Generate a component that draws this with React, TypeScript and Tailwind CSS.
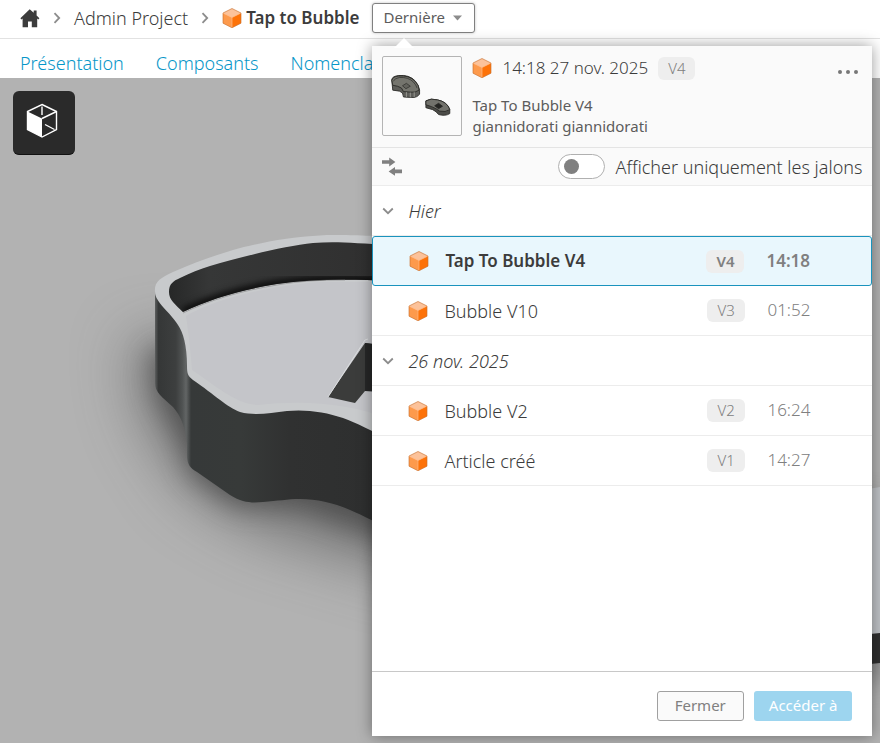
import { useState } from "react";

interface Version {
  name: string;
  tag: string;
  time: string;
  current?: boolean;
}

interface VersionGroup {
  label: string;
  versions: Version[];
}

const tabs = ["Présentation", "Composants", "Nomenclature"];

const groups: VersionGroup[] = [
  {
    label: "Hier",
    versions: [
      { name: "Tap To Bubble V4", tag: "V4", time: "14:18", current: true },
      { name: "Bubble V10", tag: "V3", time: "01:52" },
    ],
  },
  {
    label: "26 nov. 2025",
    versions: [
      { name: "Bubble V2", tag: "V2", time: "16:24" },
      { name: "Article créé", tag: "V1", time: "14:27" },
    ],
  },
];

function CubeIcon() {
  return (
    <svg width="20" height="20" viewBox="0 0 20 20" className="shrink-0" aria-hidden="true">
      <path d="M10 0.5 19 5 10 9.5 1 5Z" fill="#fcc29a" />
      <path d="M1 5 10 9.5V19.8L1 15.2Z" fill="#fd9a4c" />
      <path d="M19 5 10 9.5V19.8L19 15.2Z" fill="#fd7208" />
      <path d="M10 0.5 19 5V15.2L10 19.8 1 15.2V5Z" fill="none" stroke="#c9702f" strokeOpacity="0.7" strokeWidth="0.9" />
      <path d="M1.4 5.2 10 9.5 18.6 5.2M10 9.5V19.2" fill="none" stroke="#ffb984" strokeWidth="0.7" />
    </svg>
  );
}

function HomeIcon() {
  return (
    <svg width="20" height="19" viewBox="0 0 20 19" aria-hidden="true">
      <path
        d="M9.7 0.3 0.4 9.2 1.5 10.4 2.6 9.5V18.2H8V12.6H11.8V18.2H17.2V9.5L18.3 10.4 19.4 9.2 16.6 6.5V1.6H13.7V3.8Z"
        fill="#3c3c3c"
      />
    </svg>
  );
}

function Chevron({ className }: { className?: string }) {
  return (
    <svg width="8" height="12" viewBox="0 0 8 12" className={className} aria-hidden="true">
      <path d="M1.5 1.2 6.2 6 1.5 10.8" fill="none" stroke="#8c8c8c" strokeWidth="1.8" />
    </svg>
  );
}

function ViewCubeIcon() {
  return (
    <svg width="32" height="36" viewBox="0 0 32 36" className="mr-1 mb-1" aria-hidden="true">
      <path d="M16 1.5 30.5 8.5V26.5L16 34 1.5 26.5V8.5Z" fill="none" stroke="#fff" strokeWidth="1.4" />
      <path d="M1.5 8.5 16 15.5V34L1.5 26.5Z" fill="#fff" />
      <path d="M16 15.5 30.5 8.5M16 3.5V12M19 21.5 28.5 26.5" fill="none" stroke="#fff" strokeWidth="1.4" />
    </svg>
  );
}

function CompareIcon() {
  return (
    <svg width="20" height="19" viewBox="0 0 20 19" aria-hidden="true">
      <path d="M0 3.2H7.2V0.5L13.4 5 7.2 9.5V6.8H0Z" fill="#808080" />
      <path d="M20 12.6H13V10L6.6 14.4 13 18.8V16.2H20Z" fill="#808080" />
    </svg>
  );
}

function Thumbnail() {
  return (
    <svg
      viewBox="0 0 80 80"
      className="size-20 shrink-0 rounded-xs border border-[#b4b4b4] bg-[#fafafa]"
      role="img"
      aria-label="Tap To Bubble V4"
    >
      <g stroke="#292926" strokeWidth="0.9" strokeLinejoin="round">
        <path d="M9 23.5 Q9 20 16 19 Q27 18 33 24.5 Q37 29 37.5 34 V38 Q35 42 29 41.5 L21 41 Q21 36 17 35 L10 34 Z" fill="#5d5d59" />
        <path d="M9 24 Q10 20 16 19.5 Q27 18.5 33 25 Q37 29 37 34 Q33 37 28 36 L21 35.5 Q20 31 15 30 L10 29 Z" fill="#74746d" />
        <path d="M10.5 25 Q12 21.5 17 21 Q26 20.5 31 25.5 Q34 28.5 35 32" fill="none" strokeWidth="0.7" />
        <path d="M20 29.5 24 27 28 30 23.5 32.5Z" fill="#63635d" strokeWidth="0.7" />
        <path d="M24 36V41M28 36.5V41.5M32 36V41" fill="none" stroke="#a6a6a0" strokeWidth="0.8" />
        <path d="M44 45 Q49 42 56 44 Q66 46 68.5 54 V58 Q64 61 57 59 Q55 56 51 54 L44 52 Z" fill="#4c4c48" />
        <path d="M44 45 Q49 42 56 44 Q66 46 68.5 54 Q64 57 58 55.5 Q55 53 50 51 L44 49 Z" fill="#72726c" />
        <path d="M53 50 57 47.5 61 50.5 57 53Z" fill="#242422" />
      </g>
    </svg>
  );
}

function Scene() {
  return (
    <svg
      viewBox="0 78 880 665"
      preserveAspectRatio="xMinYMin slice"
      className="absolute inset-0 size-full"
      role="img"
      aria-label="Tap to Bubble"
    >
      <defs>
        <filter id="soft" x="-50%" y="-50%" width="200%" height="200%" colorInterpolationFilters="sRGB">
          <feGaussianBlur stdDeviation="30" />
        </filter>
        <filter id="softer" x="-50%" y="-50%" width="200%" height="200%" colorInterpolationFilters="sRGB">
          <feGaussianBlur stdDeviation="13" />
        </filter>
        <filter id="edge" x="-10%" y="-10%" width="120%" height="120%" colorInterpolationFilters="sRGB">
          <feGaussianBlur stdDeviation="3" />
        </filter>
        <linearGradient id="side" gradientUnits="userSpaceOnUse" x1="154" y1="0" x2="372" y2="0">
          <stop offset="0" stopColor="#696b6b" />
          <stop offset="0.02" stopColor="#353737" />
          <stop offset="0.1" stopColor="#3d3f3f" />
          <stop offset="0.13" stopColor="#505353" />
          <stop offset="0.147" stopColor="#626565" />
          <stop offset="0.17" stopColor="#363939" />
          <stop offset="0.4" stopColor="#373a39" />
          <stop offset="0.62" stopColor="#303131" />
          <stop offset="1" stopColor="#2e2f2f" />
        </linearGradient>
        <linearGradient id="inner" gradientUnits="userSpaceOnUse" x1="168" y1="0" x2="372" y2="0">
          <stop offset="0" stopColor="#262727" />
          <stop offset="0.2" stopColor="#363737" />
          <stop offset="1" stopColor="#303030" />
        </linearGradient>
        <clipPath id="wall">
          <path d="M183 312C175 304 169 300 169 292C169 284 173 281 180 278C190 273 200 269 210 266C240 257 285 246 313 243C335 241 355 243 390 245V281C350 279 312 279 277 284C240 290 210 299 183 312Z" />
        </clipPath>
      </defs>
      <rect x="0" y="78" width="880" height="665" fill="#b2b2b2" />
      <path
        d="M130 340 145 420 190 490 260 530 430 580V340Z"
        fill="#3c3c3c"
        fillOpacity="0.5"
        filter="url(#soft)"
      />
      <path
        d="M150 350 155 395 180 440 190 475 235 507 300 508 400 545V350Z"
        fill="#2c2c2c"
        fillOpacity="0.5"
        filter="url(#softer)"
      />
      <path
        d="M155 290V383C155 392 162 397 173 407C182 417 186 430 187 445V455C187 464 190 468 197 472L230 495C243 503 252 503 263 502C278 501 287 499 300 499C328 499 350 508 390 530V290Z"
        fill="url(#side)"
      />
      <path
        d="M155 292C154 282 160 278 173 272C193 263 213 256 233 250C255 244 285 237 327 235C345 235 360 235 390 237V440C370 430 357 423 343 418C326 412 305 409 287 411C270 413 255 416 240 412C227 407 215 395 193 380C188 376 187 374 187 366C187 345 183 332 178 325C170 312 155 302 155 292Z"
        fill="#c8cacc"
      />
      <path
        d="M186 316C215 300 260 287 320 282L390 282V420C350 402 300 400 258 405C235 404 215 385 192 370C190 345 188 330 186 316Z"
        fill="#c4c5c9"
      />
      <path
        d="M183 312C175 304 169 300 169 292C169 284 173 281 180 278C190 273 200 269 210 266C240 257 285 246 313 243C335 241 355 243 390 245V281C350 279 312 279 277 284C240 290 210 299 183 312Z"
        fill="url(#inner)"
      />
      <g clipPath="url(#wall)">
        <path
          d="M183 312C210 299 240 290 277 284C312 279 350 279 390 281"
          fill="none"
          stroke="#0c0c0c"
          strokeWidth="8"
          filter="url(#edge)"
        />
      </g>
      <path d="M183 313C210 300 240 291 277 285C300 281 320 280 345 280" fill="none" stroke="#777" strokeWidth="1" strokeOpacity="0.5" />
      <path d="M328 397 365 343 390 346V392L365 391 355 403Z" fill="#3b3c3b" />
      <path d="M365 343 390 346V392L365 391Z" fill="#262727" />
      <path d="M328 397 365 340 368 339" fill="none" stroke="#dcdee0" strokeWidth="1" />
      <path
        d="M860 500V680H880V500Z"
        fill="#3c3c3c"
        fillOpacity="0.6"
        filter="url(#softer)"
      />
      <path d="M850 492 880 487V634L850 636Z" fill="#bfc2c6" />
      <path d="M850 636 880 633V663L850 666Z" fill="#303030" />
    </svg>
  );
}

function VersionTag({ children }: { children: string }) {
  return (
    <span className="rounded-md bg-[#eeeeee] px-2.5 text-[15px] leading-[23px] text-[#808080]">{children}</span>
  );
}

function VersionRow({ version }: { version: Version }) {
  return (
    <li>
      <button
        type="button"
        className={`flex h-[50px] w-full items-center pl-9 text-left ${
          version.current
            ? "rounded-[3px] border border-[#1a93bd] bg-[#e9f7fd] text-[17px] font-semibold"
            : "border-b border-[#ececec]"
        }`}
      >
        <CubeIcon />
        <span className="ml-4 flex-1 truncate">{version.name}</span>
        <span className="flex w-[60px] shrink-0">
          <VersionTag>{version.tag}</VersionTag>
        </span>
        <span className="w-[105px] shrink-0 text-[17px] text-[#808080]">{version.time}</span>
      </button>
    </li>
  );
}

function HistoryPanel({ onClose }: { onClose: () => void }) {
  const [milestonesOnly, setMilestonesOnly] = useState(false);
  const [closed, setClosed] = useState<string[]>([]);

  const toggleGroup = (label: string) =>
    setClosed(closed.includes(label) ? closed.filter((item) => item !== label) : [...closed, label]);

  return (
    <div className="absolute top-full left-0 z-10 mt-[13px] flex h-[calc(100vh-53px)] w-[500px] flex-col bg-white shadow-[0_0_14px_rgba(0,0,0,0.4)]">
      <svg width="20" height="10" viewBox="0 0 20 10" className="absolute -top-2 left-5.5" aria-hidden="true">
        <path d="M0 10 10 0 20 10Z" fill="#fff" />
      </svg>

      <div className="flex items-start border-b border-[#e4e4e4] bg-[#fafafa] px-2.5 py-2.5">
        <Thumbnail />
        <div className="ml-2.5 flex-1">
          <div className="flex h-6 items-center">
            <CubeIcon />
            <span className="mx-2.5 text-[17px]">14:18 27 nov. 2025</span>
            <VersionTag>V4</VersionTag>
          </div>
          <p className="mt-[15px] text-[15px] leading-[21px] font-normal text-[#5c5c5c]">
            Tap To Bubble V4
            <br />
            giannidorati giannidorati
          </p>
        </div>
        <button type="button" aria-label="Plus d'options" className="mt-2.5 p-1">
          <svg width="22" height="4" viewBox="0 0 22 4" fill="#777" aria-hidden="true">
            <circle cx="4" cy="2" r="2" />
            <circle cx="12" cy="2" r="2" />
            <circle cx="20" cy="2" r="2" />
          </svg>
        </button>
      </div>

      <div className="flex h-[38px] items-center justify-between border-b border-[#ececec] bg-[#fafafa] px-2.5">
        <button type="button" aria-label="Comparer">
          <CompareIcon />
        </button>
        <label className="flex items-center gap-2.5">
          <input
            type="checkbox"
            role="switch"
            checked={milestonesOnly}
            onChange={(e) => setMilestonesOnly(e.target.checked)}
            className="flex h-[25px] w-[47px] appearance-none items-center rounded-full border border-[#b0b0b0] bg-white px-[5px] before:size-[15px] before:rounded-full before:bg-[#808080] checked:justify-end"
          />
          Afficher uniquement les jalons
        </label>
      </div>

      <div className="flex-1 overflow-hidden">
        {groups.map((group) => (
          <section key={group.label}>
            <h3>
              <button
                type="button"
                aria-expanded={!closed.includes(group.label)}
                onClick={() => toggleGroup(group.label)}
                className="flex h-[50px] w-full items-center border-b border-[#ececec] pl-3 text-left italic"
              >
                <Chevron className="mr-4 rotate-90" />
                {group.label}
              </button>
            </h3>
            {!closed.includes(group.label) && (
              <ul>
                {group.versions.map((version) => (
                  <VersionRow key={version.tag} version={version} />
                ))}
              </ul>
            )}
          </section>
        ))}
      </div>

      <div className="flex h-[65px] items-center justify-end gap-2.5 border-t border-[#c8c8c8] px-5 pt-1 text-[15px] font-normal">
        <button
          type="button"
          onClick={onClose}
          className="h-[30px] rounded-[3px] border border-[#a0a0a0] bg-[#fafafa] px-[17px] text-[#808080]"
        >
          Fermer
        </button>
        <button type="button" className="h-[30px] rounded-[3px] bg-[#9dd5ef] px-[15px] text-white">
          Accéder à
        </button>
      </div>
    </div>
  );
}

export default function App() {
  const [open, setOpen] = useState(true);

  return (
    <div className="flex min-h-screen flex-col overflow-hidden bg-white font-['Noto_Sans',sans-serif] text-lg font-light text-[#3c3c3c]">
      <header className="flex h-[39px] items-center border-b border-[#e2e2e2] pb-0.5 pl-5">
        <a href="#" aria-label="Accueil">
          <HomeIcon />
        </a>
        <Chevron className="mx-[13px]" />
        <a href="#" className="whitespace-nowrap">
          Admin Project
        </a>
        <Chevron className="mx-[13px]" />
        <CubeIcon />
        <h1 className="mr-[13px] ml-1 text-[17px] font-semibold whitespace-nowrap">Tap to Bubble</h1>
        <div className="relative">
          <button
            type="button"
            aria-expanded={open}
            onClick={() => setOpen(!open)}
            className="flex h-[30px] w-[103px] items-center justify-between rounded-[3px] border border-[#808080] bg-white px-2.5 text-[15px] font-normal text-[#5c5c5c] shadow-[0_0_3px_rgba(0,0,0,0.25)]"
          >
            Dernière
            <svg width="9" height="6" viewBox="0 0 9 6" className="mr-0.5" aria-hidden="true">
              <path d="M0 0.5H9L4.5 5.5Z" fill="#8c8c8c" />
            </svg>
          </button>
          {open && <HistoryPanel onClose={() => setOpen(false)} />}
        </div>
      </header>

      <nav className="flex h-[39px] items-center gap-8 pt-2 pl-5 text-[#0696c8]">
        {tabs.map((tab) => (
          <a key={tab} href="#">
            {tab}
          </a>
        ))}
      </nav>

      <main className="relative flex-1 bg-[#b2b2b2] p-[13px]">
        <Scene />
        <button
          type="button"
          aria-label="Vue 3D"
          className="relative flex h-16 w-[62px] items-center justify-center rounded-md border-b border-[#111] bg-[#2a2a2a]"
        >
          <ViewCubeIcon />
        </button>
      </main>
    </div>
  );
}
